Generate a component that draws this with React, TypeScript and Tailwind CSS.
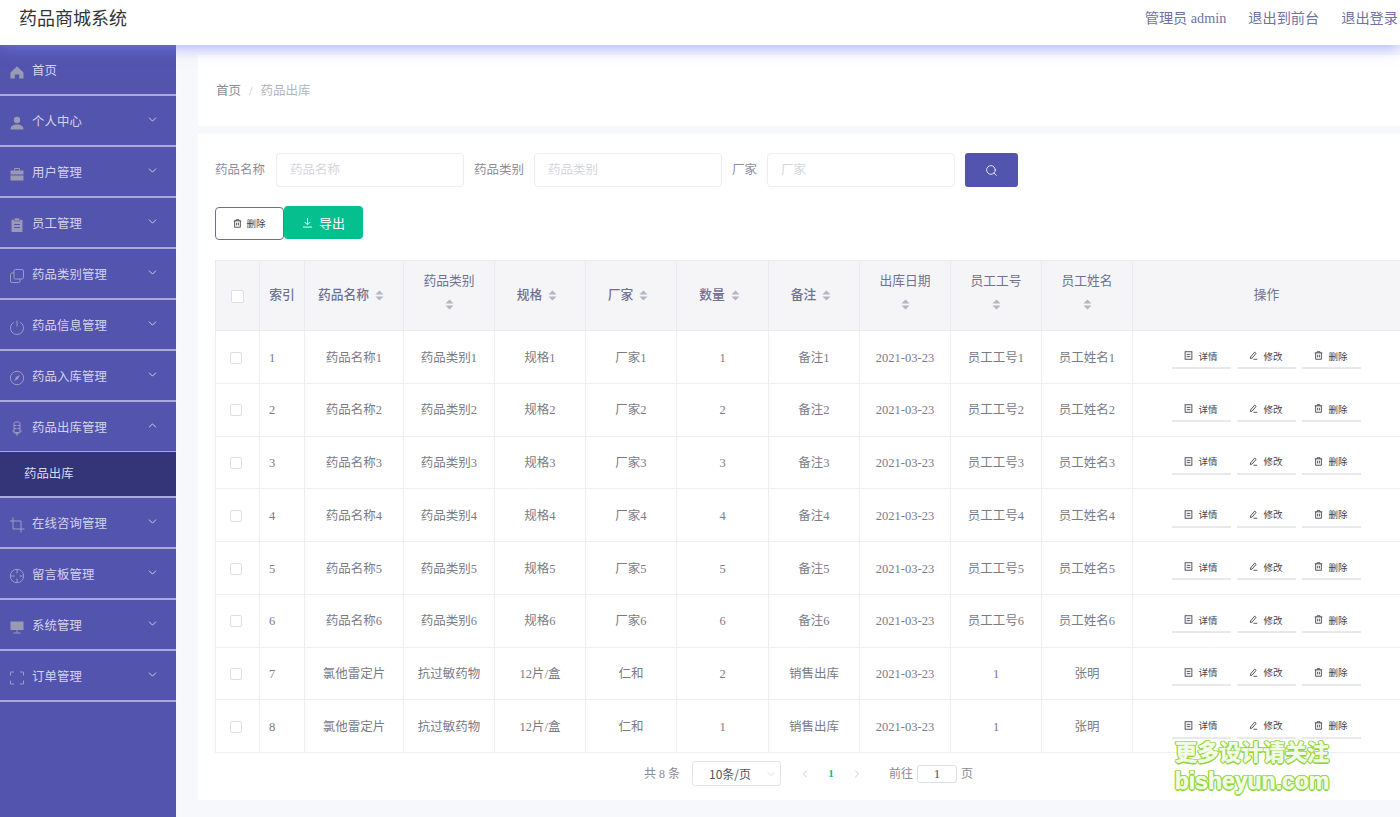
import React from "react";
import { ChevronDown, ChevronUp, ChevronLeft, ChevronRight, Search } from "lucide-react";

const serif = "font-['Liberation_Serif','Noto_Sans_CJK_SC',serif]";

const I = ({ children }: { children: React.ReactNode }) => (
  <svg viewBox="0 0 16 16" className="w-[16px] h-[16px] shrink-0" fill="none" stroke="#9c9cc0" strokeWidth="1">
    {children}
  </svg>
);
const F = "#9a9ab4";
const icons: React.ReactNode[] = [
  <I><path d="M1.5 8.5 8 2.2l6.5 6.3V14.5H10.2V10.5H5.8V14.5H1.5Z" fill={F} stroke="none" /></I>,
  <I><circle cx="8" cy="5" r="3.2" fill={F} stroke="none" /><path d="M1.5 14.5c0-3.4 2.6-5 6.5-5s6.5 1.6 6.5 5Z" fill={F} stroke="none" /></I>,
  <I><path d="M1.5 4.5h13V8.500h-13ZM1.5 9.500h13v5h-13Z" fill={F} stroke="none" /><path d="M5.5 4.500V2.500h5v2" stroke={F} /></I>,
  <I><path d="M2.5 2.800h11v12.200h-11Z" fill={F} stroke="none" /><path d="M5.500 1h5v3h-5Z" fill={F} stroke="#5354ae" strokeWidth=".6" /><path d="M5 7.500h6M5 10.500h6" stroke="#5354ae" /></I>,
  <I><rect x="5" y="1.500" width="9.500" height="9.500" rx="1.500" /><path d="M5 5H3a1.500 1.500 0 0 0-1.500 1.500V13A1.500 1.500 0 0 0 3 14.500h6.500A1.500 1.500 0 0 0 11 13v-2" /></I>,
  <I><path d="M8 1.500V7.500" /><path d="M4.800 3.300a6.500 6.500 0 1 0 6.400 0" /></I>,
  <I><circle cx="8" cy="8" r="6.700" /><path d="M10.800 5 9 9 5.200 11 7 7Z" fill="#9c9cc0" stroke="none" /></I>,
  <I><rect x="5" y="1" width="6" height="10.500" rx="1.500" /><path d="M5 4.500h2.500M8.500 4.500H11M5 7.500h2.500M8.500 7.500H11M3.800 9.500c.4 2 1.800 3 4.200 3s3.800-1 4.200-3M8 12.500V15" /></I>,
  <I><path d="M4 .5V12H15.500M1 4H12V15.500" /></I>,
  <I><circle cx="8" cy="8" r="6.700" /><path d="M8 1.300V5.500M8 10.500v4.200M1.300 8H5.500M10.500 8h4.200" /></I>,
  <I><path d="M1.500 2.500h13V11h-13Z" fill={F} stroke="none" /><path d="M8 11v2.500M4.500 14h7" stroke={F} /></I>,
  <I><path d="M5 2H1.500V5.500M11 2h3.500V5.500M5 14H1.500V10.500M11 14h3.500V10.500" /></I>,
];

const menus: [string, boolean][] = [
  ["首页", false], ["个人中心", true], ["用户管理", true], ["员工管理", true], ["药品类别管理", true],
  ["药品信息管理", true], ["药品入库管理", true], ["药品出库管理", true], ["在线咨询管理", true],
  ["留言板管理", true], ["系统管理", true], ["订单管理", true],
];

const Sidebar = () => (
  <aside className="w-[176px] shrink-0 bg-[#5354ae] flex flex-col">
    {menus.map(([name, arrow], i) => (
      <React.Fragment key={name}>
        <div className="h-[51px] shrink-0 flex items-center pt-[4px] pl-[9px] pr-[17px] border-b-2 border-[#a9aadb] text-[#d3d3ea] text-[12.4px] tracking-[0.1px]">
          {icons[i]}
          <span className="ml-[7px] flex-1">{name}</span>
          {arrow && (i === 7
            ? <ChevronUp className="w-[13px] h-[13px] text-[#dcdcf0] -mt-[6px]" strokeWidth={1.6} />
            : <ChevronDown className="w-[13px] h-[13px] text-[#dcdcf0] -mt-[6px]" strokeWidth={1.6} />)}
        </div>
        {i === 7 && (
          <div className="h-[46px] shrink-0 -mt-[1px] flex items-center pl-[24px] bg-[#343479] border-b-2 border-[#a9aadb] text-[#d9d9ee] text-[12.4px]">药品出库</div>
        )}
      </React.Fragment>
    ))}
  </aside>
);

const Caret = () => (
  <svg viewBox="0 0 10 12" className="w-[9px] h-[11px] shrink-0">
    <path d="M5 0.500 9.500 4.800H.5Z" fill="#b3b6c2" />
    <path d="M5 11.500 .5 7.200h9Z" fill="#b3b6c2" />
  </svg>
);

const DocIcon = () => (
  <svg viewBox="0 0 12 12" className="w-[9px] h-[9px] shrink-0" fill="none" stroke="currentColor" strokeWidth="1.200">
    <rect x="1.500" y="1" width="9" height="10" /><path d="M3.500 4.500h5M3.500 7.500h5" />
  </svg>
);
const EditIcon = () => (
  <svg viewBox="0 0 12 12" className="w-[9px] h-[9px] shrink-0" fill="none" stroke="currentColor" strokeWidth="1.200">
    <path d="M2 8 7.500 1.500l2 1.600L4.200 9.400 1.800 10ZM6 11h5" />
  </svg>
);
const BinIcon = () => (
  <svg viewBox="0 0 12 12" className="w-[9px] h-[9px] shrink-0" fill="none" stroke="currentColor" strokeWidth="1.200">
    <path d="M1 2.500h10M4 2.500V1h4v1.500M2.200 2.500V11h7.600V2.500M4.800 5v3.500M7.200 5v3.500" />
  </svg>
);
const DownIcon = () => (
  <svg viewBox="0 0 12 12" className="w-[11px] h-[11px] shrink-0" fill="none" stroke="currentColor" strokeWidth="1">
    <path d="M6 1v7M3 5.500 6 8.500l3-3M1 11h10" />
  </svg>
);

const widths = [44, 45, 99, 91, 91, 91, 92, 91, 91, 91, 91, 268];
const heads: [string, "none" | "inline" | "stack"][] = [
  ["", "none"], ["索引", "none"], ["药品名称", "inline"], ["药品类别", "stack"], ["规格", "inline"], ["厂家", "inline"],
  ["数量", "inline"], ["备注", "inline"], ["出库日期", "stack"], ["员工工号", "stack"], ["员工姓名", "stack"], ["操作", "none"],
];

const rows = [1, 2, 3, 4, 5, 6].map((n) => [`${n}`, `药品名称${n}`, `药品类别${n}`, `规格${n}`, `厂家${n}`, `${n}`, `备注${n}`, "2021-03-23", `员工工号${n}`, `员工姓名${n}`]);
rows.push(["7", "氯他雷定片", "抗过敏药物", "12片/盒", "仁和", "2", "销售出库", "2021-03-23", "1", "张明"]);
rows.push(["8", "氯他雷定片", "抗过敏药物", "12片/盒", "仁和", "1", "销售出库", "2021-03-23", "1", "张明"]);

const Act = ({ kind, label }: { kind: number; label: string }) => (
  <button className="w-[59px] h-[25px] flex items-center justify-center gap-[5px] border-b-2 border-[#e9e9ec] text-[#44444e] text-[9.5px] font-['Noto_Sans_CJK_SC',sans-serif]">
    {kind === 0 && <DocIcon />}
    {kind === 1 && <EditIcon />}
    {kind === 2 && <BinIcon />}
    {label}
  </button>
);

const Field = ({ label, w, mr = "", gap = "mr-[10px]" }: { label: string; w: string; mr?: string; gap?: string }) => (
  <div className={`flex items-center ${mr}`}>
    <span className={`text-[12.5px] text-[#8e8e9a] pt-[1px] ${gap}`}>{label}</span>
    <div className={`${w} h-[34px] border border-[#eeeef2] rounded-[4px] bg-white flex items-center pl-[13px] pt-[1px] text-[12.5px] text-[#d5d6dd]`}>{label}</div>
  </div>
);

export default function App() {
  return (
    <div className={`w-[1400px] h-[817px] overflow-hidden flex flex-col bg-[#f7f8fb] ${serif}`}>
      <header className="relative z-10 h-[45px] shrink-0 bg-white flex items-center justify-between pb-[7px] pl-[19px] shadow-[0_3px_14px_rgba(125,130,255,0.6)]">
        <h1 className="text-[18px] text-[#333]">药品商城系统</h1>
        <nav className="flex items-center text-[14.2px] text-[#7072a4] mr-[2px] gap-[22px]">
          <span>管理员 admin</span>
          <span>退出到前台</span>
          <span>退出登录</span>
        </nav>
      </header>
      <div className="flex flex-1 min-h-0">
        <Sidebar />
        <main className="flex-1 min-w-0 pl-[22px] pt-[10px] flex flex-col gap-[8px]">
          <div className="h-[71px] shrink-0 bg-white flex items-center pl-[18px] pt-[2px] text-[12.5px]">
            <span className="text-[#8b8b96]">首页</span>
            <span className="mx-[8px] text-[#c0c4cc]">/</span>
            <span className="text-[#b3b3bd]">药品出库</span>
          </div>
          <section className="h-[666px] shrink-0 bg-white pl-[17px] pt-[19px] flex flex-col overflow-hidden">
            <div className="flex items-center h-[34px]">
              <Field label="药品名称" w="w-[188px]" mr="mr-[10px]" gap="mr-[11px]" />
              <Field label="药品类别" w="w-[188px]" mr="mr-[10px]" />
              <Field label="厂家" w="w-[188px]" mr="mr-[10px]" />
              <button className="w-[53px] h-[34px] bg-[#5354ae] rounded-[3px] flex items-center justify-center">
                <Search className="w-[13px] h-[13px] text-white" strokeWidth={1.5} />
              </button>
            </div>
            <div className="flex items-start mt-[19px] h-[34px]">
              <button className="w-[69px] h-[33px] mt-[1px] border border-[#6a6ba8] rounded-[4px] bg-white flex items-center justify-center gap-[4px] text-[9.5px] text-[#44444e] font-['Noto_Sans_CJK_SC',sans-serif]">
                <BinIcon />删除
              </button>
              <button className="w-[79px] h-[33px] bg-[#05c08e] rounded-[4px] flex items-center justify-center gap-[6px] text-[13px] text-white font-['Noto_Sans_CJK_SC',sans-serif]">
                <DownIcon />导出
              </button>
            </div>
            <table className="mt-[20px] table-fixed border-collapse w-[1185px] text-[12.5px] text-[#7b7b86]">
              <colgroup>
                {widths.map((w, i) => <col key={i} style={{ width: w }} />)}
              </colgroup>
              <thead>
                <tr className="h-[70px] bg-[#f5f5f8]">
                  {heads.map(([h, mode], i) => (
                    <th key={i} className={`border border-[#eaebf0] text-[12.75px] text-[#6f7192] ${h === "操作" ? "font-normal" : "font-medium"}`}>
                      {i === 0 && <span className="inline-block w-[13px] h-[13px] border border-[#dcdfe6] rounded-[2px] bg-white align-middle -ml-[1px]" />}
                      {mode === "stack" ? (
                        <span className="flex flex-col items-center gap-[8px] font-normal pb-[9px]">{h}<Caret /></span>
                      ) : mode === "inline" ? (
                        <span className="inline-flex items-center gap-[6px] pr-[6px]">{h}<Caret /></span>
                      ) : h}
                    </th>
                  ))}
                </tr>
              </thead>
              <tbody>
                {rows.map((r, ri) => (
                  <tr key={ri} className="h-[52.75px]">
                    <td className="border border-[#eeeff3] text-center">
                      <span className="inline-block w-[12px] h-[12px] border border-[#dcdfe6] rounded-[2px] bg-white align-middle -ml-[3px]" />
                    </td>
                    {r.map((c, ci) => (
                      <td key={ci} className={`border border-[#eeeff3] pt-[2px] ${ci === 0 ? "text-left pl-[9px]" : "text-center"}`}>{c}</td>
                    ))}
                    <td className="border border-[#eeeff3]">
                      <div className="flex justify-center gap-[6px] pr-[1px]">
                        <Act kind={0} label="详情" />
                        <Act kind={1} label="修改" />
                        <Act kind={2} label="删除" />
                      </div>
                    </td>
                  </tr>
                ))}
              </tbody>
            </table>
            <div className="flex items-center mt-[8px] ml-[429px] text-[12px] text-[#8b8b96]">
              <span className="mr-[12px]">共 8 条</span>
              <div className="relative w-[89px] h-[25px] border border-[#e4e6ec] rounded-[3px] flex items-center pl-[16px] text-[12px] text-[#555] font-['Noto_Sans_CJK_SC',sans-serif]">
                10条/页
                <ChevronDown className="absolute right-[3px] top-[6px] w-[12px] h-[12px] text-[#c0c4cc]" strokeWidth={1.2} />
              </div>
              <ChevronLeft className="w-[12px] h-[12px] ml-[18px] text-[#a8abb3]" strokeWidth={1.2} />
              <span className="w-[14px] text-center ml-[13px] font-bold text-[#05c08e] text-[11px]">1</span>
              <ChevronRight className="w-[12px] h-[12px] ml-[13px] text-[#a8abb3]" strokeWidth={1.2} />
              <span className="ml-[26px]">前往</span>
              <div className="w-[40px] h-[18px] mx-[4px] border border-[#dcdfe6] rounded-[3px] flex items-center justify-center text-[13px] text-[#555]">1</div>
              <span>页</span>
            </div>
          </section>
        </main>
      </div>
      <div className="absolute left-[1174px] top-[739px] w-[156px] z-20 text-center font-['Liberation_Sans','Noto_Sans_CJK_SC',sans-serif] font-bold text-[#f4fbe4] [-webkit-text-stroke:0.6px_#f4fbe4] [text-shadow:1.5px_0_#8fd53c,-1.5px_0_#8fd53c,0_1.5px_#8fd53c,0_-1.5px_#8fd53c,1px_1px_#8fd53c,-1px_-1px_#8fd53c,1px_-1px_#8fd53c,-1px_1px_#8fd53c]">
        <div className="text-[22px] leading-[28px] whitespace-nowrap">更多设计请关注</div>
        <div className="text-[23px] leading-[28px] whitespace-nowrap">bisheyun.com</div>
      </div>
    </div>
  );
}
